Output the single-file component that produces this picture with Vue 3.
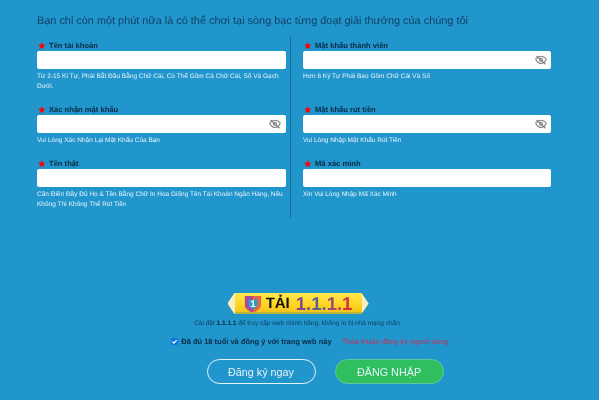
<script setup>
const left = [
  { label: 'Tên tài khoản', hint: 'Từ 2-15 Kí Tự, Phải Bắt Đầu Bằng Chữ Cái, Có Thể Gồm Cả Chữ Cái, Số Và Gạch Dưới.' },
  { label: 'Xác nhận mật khẩu', eye: true, hint: 'Vui Lòng Xác Nhận Lại Mật Khẩu Của Bạn' },
  { label: 'Tên thật', hint: 'Cần Điền Đầy Đủ Họ & Tên Bằng Chữ In Hoa Giống Tên Tài Khoản Ngân Hàng, Nếu Không Thì Không Thể Rút Tiền' },
]
const right = [
  { label: 'Mật khẩu thành viên', eye: true, hint: 'Hơn 6 Ký Tự Phải Bao Gồm Chữ Cái Và Số' },
  { label: 'Mật khẩu rút tiền', eye: true, hint: 'Vui Lòng Nhập Mật Khẩu Rút Tiền' },
  { label: 'Mã xác minh', hint: 'Xin Vui Lòng Nhập Mã Xác Minh' },
]
const columns = [left, right]
</script>

<template>
  <div class="page">
    <h1 class="title">Bạn chỉ còn một phút nữa là có thể chơi tại sòng bạc từng đoạt giải thưởng của chúng tôi</h1>
    <div class="form">
      <div v-for="(col, c) in columns" :key="c" class="col" :class="{ first: c === 0 }">
        <div v-for="(f, i) in col" :key="f.label" class="field" :class="'row' + i">
          <div class="label">
            <svg class="star" viewBox="0 0 20 20"><path d="M10 0l2.900 6.600 7.100.700-5.400 4.700 1.600 7L10 15.300 3.800 19l1.600-7L0 7.300l7.100-.700Z" fill="#f2050f" /></svg>
            <span>{{ f.label }}</span>
          </div>
          <div class="input">
            <svg v-if="f.eye" class="eye" viewBox="0 0 24 24" fill="none" stroke="#808080" stroke-width="2.200" stroke-linecap="round">
              <path d="M1.500 10C4.500 6 8 4.500 12 4.500s7.500 1.500 10.500 5.500C22 14 17 19 12 19S2 14 1.500 10Z" />
              <circle cx="12" cy="11.500" r="3" />
              <path d="M3.500 4.500L20.500 20" />
            </svg>
          </div>
          <p class="hint">{{ f.hint }}</p>
        </div>
      </div>
    </div>

    <div class="bottom">
      <div class="banner">
        <svg class="shield" viewBox="0 0 20 20">
          <path d="M1 1h18v10c0 4-5 7-9 8.500C6 18 1 15 1 11Z" fill="#e8663f" />
          <path d="M1 1h9v18.500C6 18 1 15 1 11Z" fill="#b0479a" />
          <path d="M5 4l5 2 5-2v7c0 2-3 4-5 5-2-1-5-3-5-5Z" fill="#2f9ac4" />
          <text x="10" y="13.500" text-anchor="middle" class="shield-num">1</text>
        </svg>
        <span class="tai">TẢI</span>
        <span class="ver">1.1.1.1</span>
      </div>
      <p class="note">Cài đặt <b>1.1.1.1</b> để truy cập web chính hãng, không lo bị nhà mạng chặn</p>
      <div class="agree">
        <span class="check"><svg viewBox="0 0 10 10"><path d="M2 5.200l2.200 2.200L8 3" fill="none" stroke="#fff" stroke-width="1.600" /></svg></span>
        <span class="agree-text">Đã đủ 18 tuổi và đồng ý với trang web này</span>
        <span class="terms">Thỏa thuận đăng ký người dùng</span>
      </div>
      <div class="buttons">
        <button class="btn ghost">Đăng ký ngay</button>
        <button class="btn solid">ĐĂNG NHẬP</button>
      </div>
    </div>
  </div>
</template>

<style scoped>
.page {
  width: 599px;
  height: 400px;
  background: #2196cc;
  font-family: "Liberation Sans", Arial, sans-serif;
  text-rendering: geometricPrecision;
  display: flex;
  flex-direction: column;
  overflow: hidden;
  box-sizing: border-box;
  padding-top: 14px;
  filter: blur(0.3px);
}
.title {
  margin: 0 0 0 37px;
  font-size: 10.900px;
  line-height: 15px;
  font-weight: 400;
  color: #0f4266;
  white-space: nowrap;
}
.form {
  display: flex;
  margin: 7px 0 0 37px;
}
.col {
  width: 248px;
  padding-top: 4px;
  height: 182px;
  box-sizing: border-box;
}
.col.first {
  width: 254px;
  padding-right: 4.500px;
  border-right: 1.500px solid #1a6d99;
  margin-right: 12px;
}
.field { display: flex; flex-direction: column; }
.row0 { height: 64px; }
.row1 { height: 54px; }
.label {
  display: flex;
  align-items: center;
  height: 10px;
  font-size: 7.600px;
  font-weight: 700;
  color: #0a2a44;
  margin-bottom: 1px;
}
.star {
  width: 7.500px;
  height: 7.500px;
  margin: 1px 3.500px 0 1px;
  flex: none;
}
.input {
  height: 18px;
  background: #fff;
  border-radius: 2px;
  display: flex;
  justify-content: flex-end;
  align-items: center;
  padding-right: 4.500px;
  flex: none;
}
.eye { width: 12px; height: 12px; }
.hint {
  margin: 3px 0 0;
  font-size: 6.500px;
  line-height: 9.500px;
  color: #e6f3fa;
}
.bottom {
  margin-top: 75px;
  display: flex;
  flex-direction: column;
  align-items: center;
}
.banner {
  width: 141px;
  height: 21px;
  box-sizing: border-box;
  display: flex;
  align-items: center;
  justify-content: center;
  gap: 4px;
  background:
    linear-gradient(90deg, #f5efc8 0 5%, transparent 5% 95%, #f5efc8 95%),
    linear-gradient(#ffe94e, #ffd21f 60%, #f4c51a 90%, #b9b63c 90%);
  clip-path: polygon(0 50%, 5% 0, 95% 0, 100% 50%, 95% 100%, 5% 100%);
  margin-left: -3px;
}
.shield { width: 18px; height: 18px; }
.shield-num { font-size: 11px; font-weight: 700; fill: #fff; font-family: "Liberation Sans", sans-serif; }
.tai { font-size: 15px; font-weight: 700; color: #111; }
.ver {
  font-size: 18.500px;
  font-weight: 700;
  margin-left: 2px;
  background: linear-gradient(90deg, #8a3f8c, #4a6a90 45%, #c23b5c 75%, #e0243a);
  -webkit-background-clip: text;
  background-clip: text;
  color: transparent;
}
.note {
  margin: 5px 0 0 -5px;
  font-size: 6.500px;
  line-height: 9px;
  color: #0d3f63;
}
.note b { color: #0a2a44; }
.agree {
  display: flex;
  align-items: center;
  margin: 7px 0 0 21px;
  height: 12px;
  white-space: nowrap;
}
.check {
  width: 7px;
  height: 7px;
  background: #0b76e0;
  border-radius: 1.500px;
  margin-right: 3px;
  display: flex;
}
.agree-text { font-size: 7.500px; font-weight: 700; color: #0a2a44; }
.terms { font-size: 7.500px; color: #c2305a; margin-left: 10px; }
.buttons {
  display: flex;
  gap: 19px;
  margin: 12px 0 0 51px;
}
.btn {
  width: 109px;
  height: 25px;
  border-radius: 13px;
  box-sizing: border-box;
  font-family: inherit;
  font-size: 10.800px;
  color: #e6f3fa;
  padding: 0;
}
.ghost { background: transparent; border: 1px solid #e6f3fa; }
.solid { background: #2fbf5f; border: 1px solid #5fc7a0; }
</style>
